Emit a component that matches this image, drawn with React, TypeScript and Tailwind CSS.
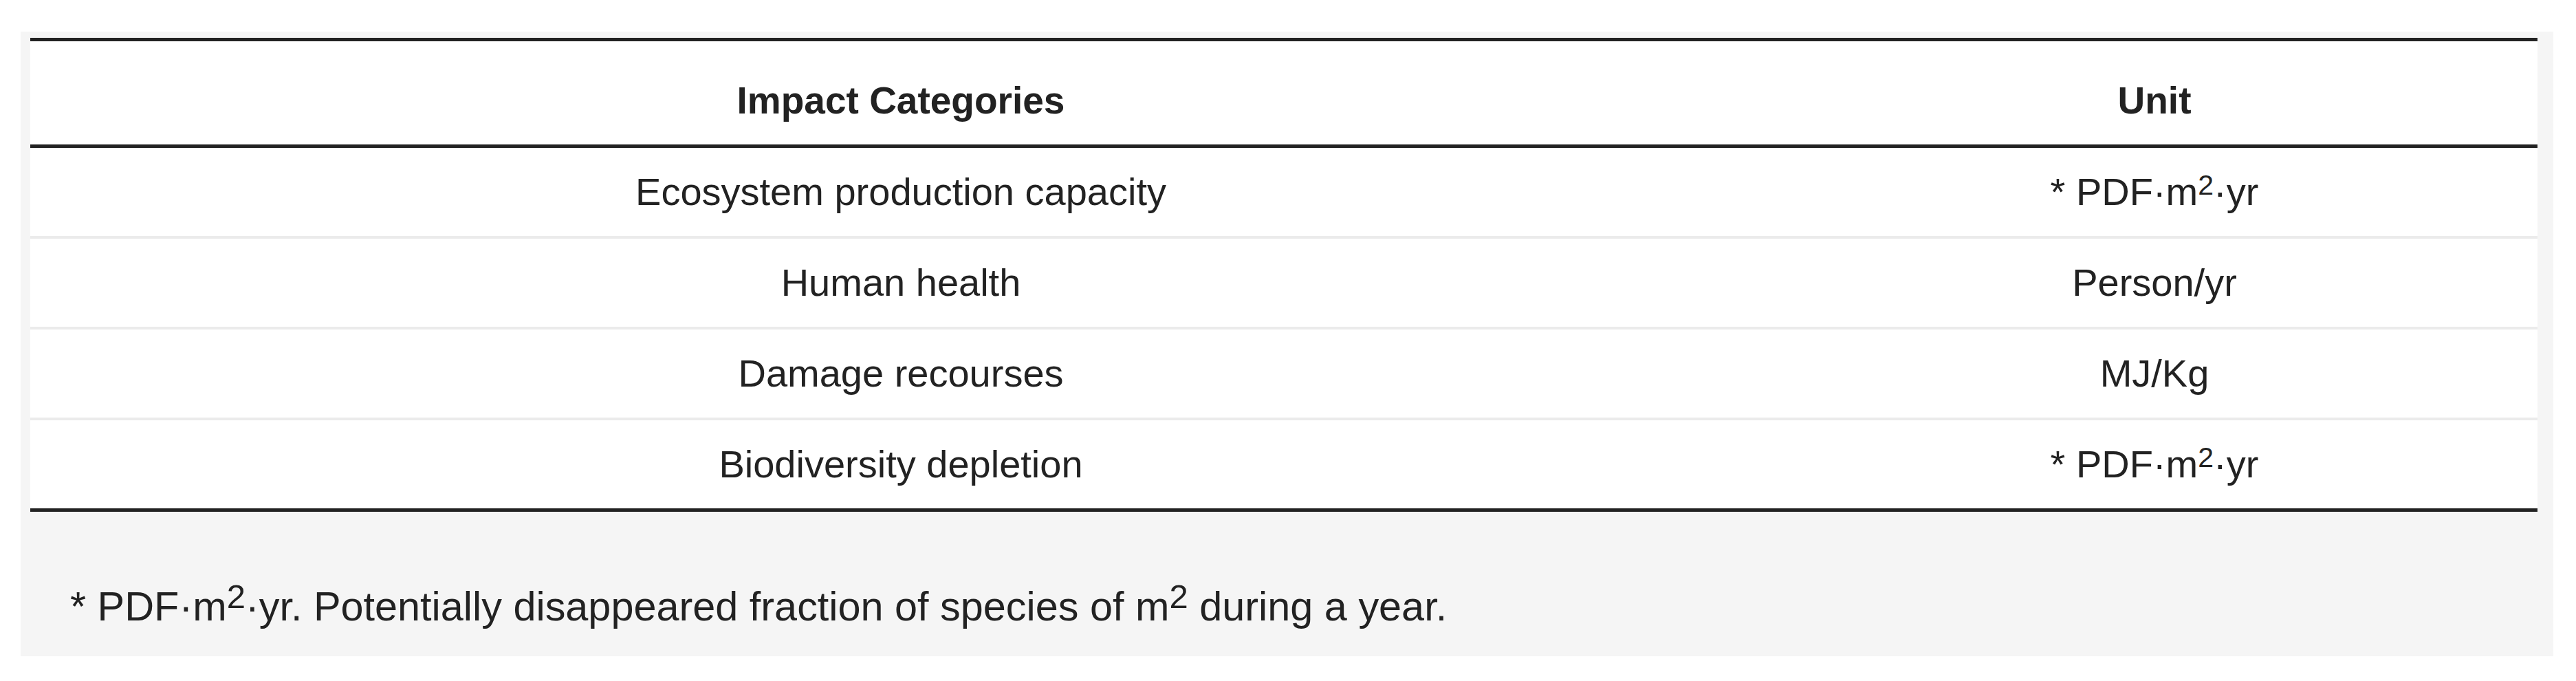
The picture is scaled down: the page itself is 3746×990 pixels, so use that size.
import React from 'react';

interface ImpactRow {
  category: string;
  unit: React.ReactNode;
}

const Pdf = () => (
  <>
    * PDF·m
    <sup className="relative top-[-15px] text-[41px] leading-none">2</sup>
    ·yr
  </>
);

const rows: ImpactRow[] = [
  { category: 'Ecosystem production capacity', unit: <Pdf /> },
  { category: 'Human health', unit: 'Person/yr' },
  { category: 'Damage recourses', unit: 'MJ/Kg' },
  { category: 'Biodiversity depletion', unit: <Pdf /> },
];

export default function App() {
  return (
    <div className="w-[3746px] h-[990px] overflow-hidden bg-white pt-[46px] pl-[30px] font-['Liberation_Sans',Arial,sans-serif] text-[#222]">
      <div className="w-[3683px] h-[908px] bg-[#f5f5f5] pt-[9px] pl-[14px] pr-[23px]">
        {/* Table */}
        <div className="bg-white border-t-[5px] border-[#222]">
          <div className="grid grid-cols-[2532px_1fr] h-[155px] border-b-[5px] border-[#222] pt-[56px] text-[55px] leading-[60px] font-bold text-center">
            <div>Impact Categories</div>
            <div>Unit</div>
          </div>
          {rows.map((row, i) => (
            <div
              key={row.category}
              className={`grid grid-cols-[2532px_1fr] items-center text-center text-[56px] leading-[60px] ${
                i === rows.length - 1
                  ? 'h-[133px] border-b-[5px] border-[#222]'
                  : 'h-[132px] border-b-[4px] border-[#ebebeb]'
              }`}
            >
              <div>{row.category}</div>
              <div>{row.unit}</div>
            </div>
          ))}
        </div>

        {/* Footnote */}
        <p className="mt-[108px] pl-[58px] text-[59.4px] leading-[60px]">
          * PDF·m
          <sup className="relative top-[-18px] text-[49px] leading-none">2</sup>
          ·yr. Potentially disappeared fraction of species of m
          <sup className="relative top-[-18px] text-[49px] leading-none">2</sup> during a year.
        </p>
      </div>
    </div>
  );
}
